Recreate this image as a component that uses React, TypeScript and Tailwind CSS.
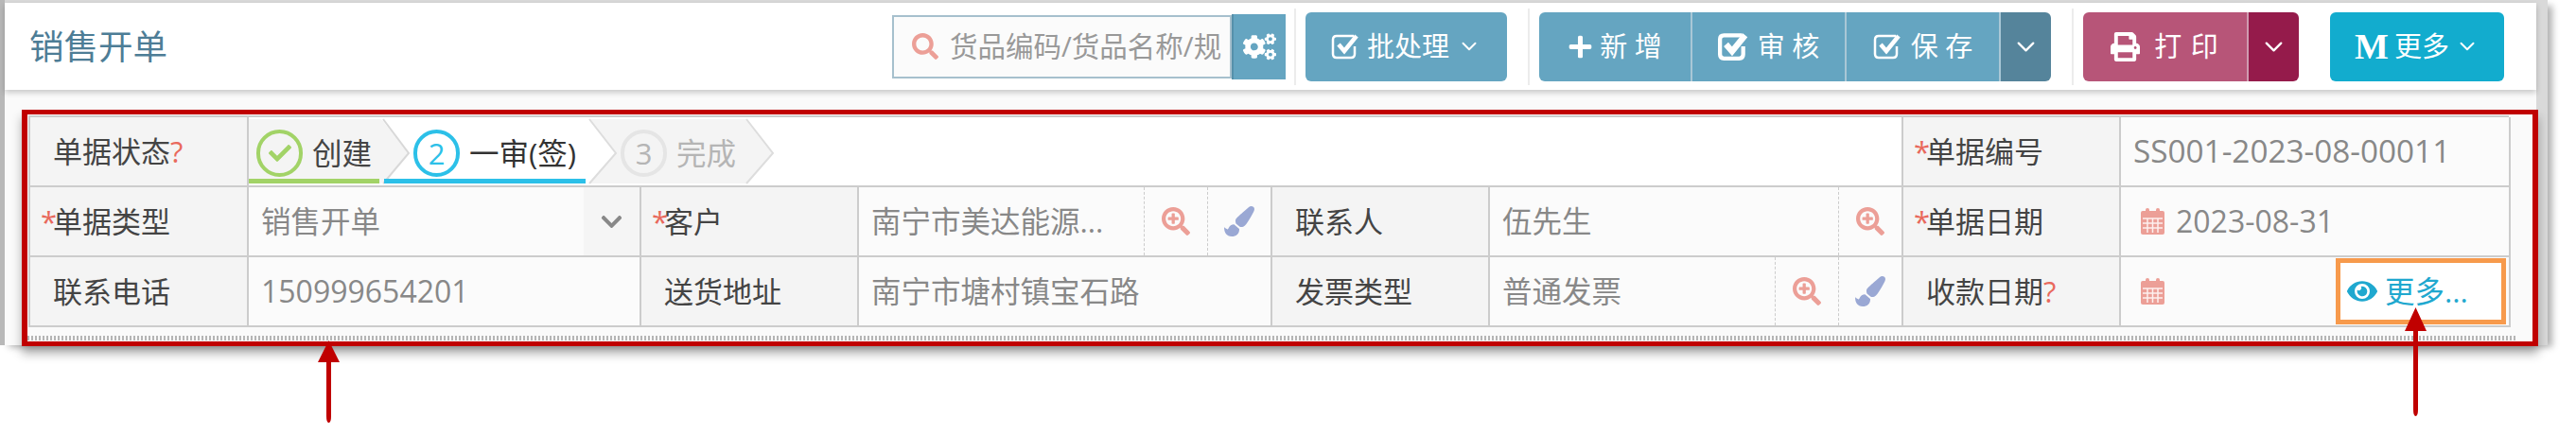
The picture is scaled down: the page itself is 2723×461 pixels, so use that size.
import React from "react";
import { ChevronDown } from "lucide-react";
import { FaCogs, FaPlus, FaPrint, FaSearch, FaSearchPlus, FaPaintBrush, FaEye, FaChevronDown, FaCheck } from "react-icons/fa";

const CJK = "font-['Open_Sans','Noto_Sans_CJK_SC',sans-serif]";

function CheckBox({ w, sw }: { w: number; sw: number }) {
  return (
    <svg width={w} height={w} viewBox="0 0 30 30" fill="none" stroke="currentColor" className="shrink-0">
      <path d="M25 15V23Q25 27 21 27H6Q2 27 2 23V8Q2 4 6 4H24" strokeWidth={sw} />
      <path d="M8 13L14 20L27 4" strokeWidth={sw + 2} />
    </svg>
  );
}

function Calendar() {
  return (
    <svg width="25" height="28" viewBox="0 0 25 28" className="shrink-0">
      <rect x="0" y="3" width="25" height="25" rx="2" fill="#ec9f97" />
      <rect x="5" y="0" width="4" height="7" rx="2" fill="#ec9f97" />
      <rect x="16" y="0" width="4" height="7" rx="2" fill="#ec9f97" />
      <path d="M2 11H23M2 16H23M2 21H23M7 11V26M12.5 11V26M18 11V26" stroke="#fdf0ee" strokeWidth="1.5" />
    </svg>
  );
}

function Label({ text, star, q }: { text: string; star?: boolean; q?: boolean }) {
  return (
    <div className="flex items-center bg-[#f4f4f4] border-r-2 border-b-2 border-[#cccccc] pl-[11px] text-[31px] text-[#444444]">
      <span className="w-[13px] text-[#e9695c]">{star ? "*" : ""}</span>
      <span>{text}</span>
      {q && <span className="text-[#e9695c]">?</span>}
    </div>
  );
}

function IconCell({ kind }: { kind: "zoom" | "brush" }) {
  return (
    <div className="flex h-full w-[67px] shrink-0 items-center justify-center border-l border-dashed border-[#cccccc]">
      {kind === "zoom" ? <FaSearchPlus className="text-[30px] text-[#ec9f97]" /> : <FaPaintBrush className="text-[32px] text-[#9aa8d4]" />}
    </div>
  );
}

function Value({ text, icons = [], size = "text-[31.5px]" }: { text: string; icons?: ("zoom" | "brush")[]; size?: string }) {
  return (
    <div className={`flex items-center bg-[#fbfbfb] border-r-2 border-b-2 border-[#cccccc] text-[#888888] ${size}`}>
      <span className="flex-1 pl-[13px] whitespace-nowrap">{text}</span>
      {icons.map((k, i) => <IconCell key={i} kind={k} />)}
    </div>
  );
}

function Btn({ className, children }: { className: string; children: React.ReactNode }) {
  return <div className={`flex h-[73px] items-center justify-center text-[29px] text-white ${className}`}>{children}</div>;
}

const Divider = () => <div className="h-[81px] w-[2px] bg-[#ececec]" />;

function Step({ n, color, label, text, cls, done }: { n: string; color: string; label: string; text: string; cls: string; done?: boolean }) {
  return (
    <div className={`flex items-center ${cls}`}>
      <div className={`flex h-[50px] w-[49px] items-center justify-center rounded-full border-4 text-[31px] ${color}`}>
        {done ? <FaCheck className="text-[24px] text-[#a2d367]" /> : n}
      </div>
      <span className={`ml-[10px] text-[31.5px] whitespace-nowrap ${text}`}>{label}</span>
    </div>
  );
}

export default function App() {
  return (
    <div className={`relative h-[461px] w-[2723px] overflow-hidden bg-white ${CJK}`}>
      <div className="h-[365px] w-[2693px] border-l-[5px] border-l-[#b8b8b8] bg-[#d9d9d9] pt-[3px] pr-[12px] shadow-[7px_4px_7px_-2px_rgba(0,0,0,0.3)]">
        <div className="flex h-full flex-col bg-[#fafafa]">
          <header className="flex h-[92px] shrink-0 items-center bg-white pr-[34px] pl-[26px] shadow-[0_3px_6px_rgba(0,0,0,0.2)]">
            <h1 className="text-[36.5px] font-normal text-[#4d7d96]">销售开单</h1>
            <div className="ml-auto flex items-center">
              <div className="flex h-[67px] w-[359px] items-center overflow-hidden border-2 border-[#a6c0cd] bg-[#fbfbfb] pl-[19px]">
                <FaSearch className="shrink-0 text-[28px] text-[#ec9f97]" />
                <span className="ml-[12px] text-[29.5px] whitespace-nowrap text-[#999999]">货品编码/货品名称/规</span>
              </div>
              <div className="flex h-[69px] w-[57px] items-center justify-center border-l-2 border-[#5590aa] bg-[#65a5c1] text-[35px] text-white"><FaCogs /></div>
              <div className="ml-[9px]"><Divider /></div>
              <Btn className="ml-[10px] w-[213px] gap-[8px] rounded-[6px] bg-[#65a5c1]">
                <CheckBox w={30} sw={2.5} /><span>批处理</span><ChevronDown size={26} strokeWidth={1.8} />
              </Btn>
              <div className="ml-[22px]"><Divider /></div>
              <div className="ml-[10px] flex">
                <Btn className="w-[160px] gap-[7px] rounded-l-[6px] bg-[#65a5c1]"><FaPlus className="text-[27px]" /><span>新 增</span></Btn>
                <Btn className="w-[163px] gap-[10px] border-l-2 border-[#a9c7d6] bg-[#65a5c1]"><CheckBox w={32} sw={4} /><span>审 核</span></Btn>
                <Btn className="w-[163px] gap-[10px] border-l-2 border-[#a9c7d6] bg-[#65a5c1]"><CheckBox w={30} sw={2.5} /><span>保 存</span></Btn>
                <Btn className="w-[55px] rounded-r-[6px] border-l-2 border-[#a9c7d6] bg-[#55849b]"><ChevronDown size={31} strokeWidth={1.8} /></Btn>
              </div>
              <div className="ml-[22px]"><Divider /></div>
              <div className="ml-[10px] flex">
                <Btn className="w-[173px] gap-[15px] rounded-l-[6px] bg-[#b75578]"><FaPrint className="text-[31px]" /><span className="tracking-[1px]">打 印</span></Btn>
                <Btn className="w-[55px] rounded-r-[6px] border-l-2 border-[#cf9bb0] bg-[#951b4b]"><ChevronDown size={31} strokeWidth={1.8} /></Btn>
              </div>
              <Btn className="ml-[33px] w-[184px] gap-[6px] rounded-[6px] bg-[#12acce]">
                <span className="font-['Liberation_Serif',serif] text-[38px] leading-none font-bold">M</span><span>更多</span><ChevronDown size={26} strokeWidth={1.8} />
              </Btn>
            </div>
          </header>

          <div className="mt-[27px] ml-[25px] grid w-[2622px] shrink-0 grid-cols-[231px_415px_230px_437px_230px_437px_230px_412px] grid-rows-[74px_74px_74px] border-t-2 border-l-2 border-[#cccccc]">
            <Label text="单据状态" q />
            <div className="relative col-span-5 flex items-center border-r-2 border-b-2 border-[#cccccc] bg-white">
              <svg className="absolute top-0 left-0" width="560" height="72" viewBox="0 0 560 72">
                <path d="M0 2H140L169 38L140 70H0Z" fill="#f4f4f4" />
                <path d="M142 2L169 38L142 70" fill="none" stroke="#d8d8d8" strokeWidth="2" />
                <path d="M360 2H526L554 38L526 70H360L388 38Z" fill="#f4f4f4" />
                <path d="M360 2L388 38L360 70M526 2L554 38L526 70" fill="none" stroke="#dddddd" strokeWidth="2" />
                <rect x="0" y="65" width="138" height="5" fill="#a2d367" />
                <rect x="143" y="65" width="213" height="5" fill="#2cc0e8" />
              </svg>
              <Step n="1" done color="relative border-[#a2d367]" label="创建" text="relative text-[#444444]" cls="relative ml-[8px] w-[166px] pt-[4px]" />
              <Step n="2" color="border-[#2cc0e8] text-[#2cc0e8]" label="一审(签)" text="text-[#333333]" cls="relative w-[219px] pt-[4px]" />
              <Step n="3" color="border-[#e5e5e5] text-[#b5b5b5]" label="完成" text="text-[#b5b5b5]" cls="relative pt-[4px]" />
            </div>
            <Label text="单据编号" star />
            <Value text="SS001-2023-08-00011" size="text-[33.3px]" />

            <Label text="单据类型" star />
            <div className="flex items-center border-r-2 border-b-2 border-[#cccccc] bg-[#fbfbfb] text-[31.5px] text-[#888888]">
              <span className="flex-1 pl-[13px]">销售开单</span>
              <div className="flex h-full w-[59px] items-center justify-center bg-[#f5f5f5]"><FaChevronDown className="text-[25px] text-[#888888]" /></div>
            </div>
            <Label text="客户" star />
            <Value text="南宁市美达能源..." icons={["zoom", "brush"]} />
            <Label text="联系人" />
            <Value text="伍先生" icons={["zoom"]} />
            <Label text="单据日期" star />
            <div className="flex items-center gap-[12px] border-r-2 border-b-2 border-[#cccccc] bg-[#fbfbfb] pl-[21px] text-[32px] text-[#888888]">
              <Calendar /><span>2023-08-31</span>
            </div>

            <Label text="联系电话" />
            <Value text="150999654201" size="text-[32px]" />
            <Label text="送货地址" />
            <Value text="南宁市塘村镇宝石路" />
            <Label text="发票类型" />
            <Value text="普通发票" icons={["zoom", "brush"]} />
            <Label text="收款日期" q />
            <div className="flex items-center border-r-2 border-b-2 border-[#cccccc] bg-[#fbfbfb] pl-[21px]">
              <Calendar />
              <div className="mr-[3px] mb-[1px] ml-auto flex h-[70px] w-[180px] items-center gap-[8px] border-[5px] border-[#f79a4c] bg-white pl-[7px] text-[31.5px] text-[#1fa8cf]">
                <FaEye className="text-[32px]" /><span>更多...</span>
              </div>
            </div>
          </div>
          <div className="mt-[9px] ml-[24px] h-[5px] w-[2630px] bg-[repeating-linear-gradient(90deg,#b5b5b5_0,#b5b5b5_2px,transparent_2px,transparent_4px)]" />
        </div>
      </div>

      {/* red annotations over the screenshot */}
      <div className="pointer-events-none absolute top-[116px] left-[23px] h-[250px] w-[2660px] border-x-[6px] border-y-[5px] border-[#c00000] shadow-[0_8px_10px_rgba(0,0,0,0.3)]" />
      <svg className="pointer-events-none absolute top-[358px] left-[335px]" width="26" height="92" viewBox="0 0 26 92">
        <path d="M12.5 2L24 25H15V82Q15 89 12.5 89Q10 89 10 82V25H1Z" fill="#c00000" />
      </svg>
      <svg className="pointer-events-none absolute top-[323px] left-[2541px]" width="26" height="120" viewBox="0 0 26 120">
        <path d="M12.5 2L24 27H15V110Q15 117 12.5 117Q10 117 10 110V27H1Z" fill="#c00000" />
      </svg>
    </div>
  );
}
